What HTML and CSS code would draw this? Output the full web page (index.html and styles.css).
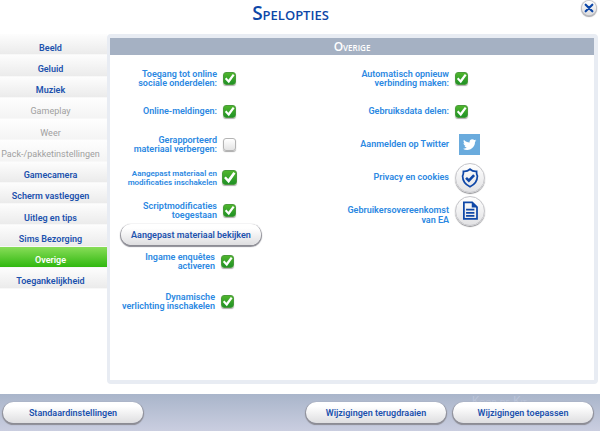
FILE: index.html
```
<!DOCTYPE html>
<html lang="nl">
<head>
    <title>Spelopties</title>
    <meta charset="utf-8">
    <meta name="viewport" content="width=device-width, initial-scale=1.0">
    <link rel="stylesheet" href="styles.css">
</head>
<body>
    <header class="topbar">
        <h1>Spelopties</h1>
        <button class="close" type="button" aria-label="Sluiten">
            <svg viewBox="0 0 16 16"><path d="M4.2 4.200l7.600 7.600M11.800 4.200l-7.600 7.600"/></svg>
        </button>
    </header>

    <div class="main">
        <nav class="tabs">
            <a href="#beeld">Beeld</a>
            <a href="#geluid">Geluid</a>
            <a href="#muziek">Muziek</a>
            <a href="#gameplay" class="disabled">Gameplay</a>
            <a href="#weer" class="disabled">Weer</a>
            <a href="#pack" class="disabled">Pack-/pakketinstellingen</a>
            <a href="#gamecamera">Gamecamera</a>
            <a href="#scherm">Scherm vastleggen</a>
            <a href="#uitleg">Uitleg en tips</a>
            <a href="#sims">Sims Bezorging</a>
            <a href="#overige" class="active">Overige</a>
            <a href="#toegankelijkheid">Toegankelijkheid</a>
        </nav>

        <section class="panel">
            <h2>Overige</h2>
            <div class="columns">
                <div class="col col-left">
                    <div class="row">
                        <label for="online">Toegang tot online<br>sociale onderdelen:</label>
                        <input type="checkbox" id="online" checked>
                    </div>
                    <div class="row">
                        <label for="meldingen">Online-meldingen:</label>
                        <input type="checkbox" id="meldingen" checked>
                    </div>
                    <div class="row">
                        <label for="verbergen">Gerapporteerd<br>materiaal verbergen:</label>
                        <input type="checkbox" id="verbergen">
                    </div>
                    <div class="row">
                        <label for="mods" class="small">Aangepast materiaal en<br>modificaties inschakelen</label>
                        <input type="checkbox" id="mods" class="big" checked>
                    </div>
                    <div class="row">
                        <label for="script">Scriptmodificaties<br>toegestaan</label>
                        <input type="checkbox" id="script" checked>
                    </div>
                    <button class="btn" type="button">Aangepast materiaal bekijken</button>
                    <div class="extra">
                        <div class="row">
                            <label for="enquete">Ingame enquêtes<br>activeren</label>
                            <input type="checkbox" id="enquete" checked>
                        </div>
                        <div class="row">
                            <label for="licht">Dynamische<br>verlichting inschakelen</label>
                            <input type="checkbox" id="licht" checked>
                        </div>
                    </div>
                </div>

                <div class="col col-right">
                    <div class="row">
                        <label for="verbinding">Automatisch opnieuw<br>verbinding maken:</label>
                        <input type="checkbox" id="verbinding" checked>
                    </div>
                    <div class="row">
                        <label for="data">Gebruiksdata delen:</label>
                        <input type="checkbox" id="data" checked>
                    </div>
                    <div class="row">
                        <label for="twitter">Aanmelden op Twitter</label>
                        <button class="twitter" id="twitter" type="button">
                            <svg viewBox="0 0 24 24"><path d="M23 5.500c-.8.400-1.600.6-2.500.7.900-.5 1.500-1.300 1.900-2.400-.9.500-1.800.9-2.800 1.100-.8-.9-1.900-1.400-3.200-1.400-2.800 0-4.900 2.600-4.200 5.300C8.600 8.600 5.300 6.900 3.100 4.200c-1.200 2-.6 4.600 1.300 5.800-.7 0-1.400-.2-2-.5 0 2 1.400 3.900 3.500 4.300-.6.200-1.300.2-2 .1.600 1.700 2.200 3 4.100 3-1.800 1.400-4.100 2.100-6.500 1.800 2 1.300 4.300 2 6.800 2 8.200 0 12.800-6.900 12.500-13.100.9-.6 1.600-1.300 2.200-2.100z"/></svg>
                        </button>
                    </div>
                    <div class="row">
                        <label for="privacy">Privacy en cookies</label>
                        <button class="round" id="privacy" type="button">
                            <svg viewBox="0 0 32 32">
                                <path class="line" d="M16 6c-2.200 2-4.800 2.800-7.500 2.500.2 2.200-.2 3.600-1 5.300.2 5.800 3.200 9.900 8.500 12.200 5.300-2.300 8.300-6.400 8.500-12.200-.8-1.700-1.200-3.100-1-5.300-2.700.3-5.300-.5-7.500-2.500z"/>
                                <path class="tick" d="M11.500 15.800l3.200 3.200 6-6.200"/>
                            </svg>
                        </button>
                    </div>
                    <div class="row tall">
                        <label for="ea">Gebruikersovereenkomst<br>van EA</label>
                        <button class="round" id="ea" type="button">
                            <svg viewBox="0 0 32 32">
                                <path class="line" d="M9 6h9.500l5.500 5.500V25H9z"/>
                                <path class="fill" d="M18 5.500v6.500h6.500z"/>
                                <path class="line" d="M11.500 14.500h9.500M11.500 18h9.500M11.500 21.500h9.500"/>
                            </svg>
                        </button>
                    </div>
                </div>
            </div>
        </section>
    </div>

    <footer class="bottombar">
        <span class="ghost">Koor de Kit</span>
        <button class="btn" type="button">Standaardinstellingen</button>
        <div class="actions">
            <button class="btn" type="button">Wijzigingen terugdraaien</button>
            <button class="btn" type="button">Wijzigingen toepassen</button>
        </div>
    </footer>
</body>
</html>
```
FILE: styles.css
```
* {
    box-sizing: border-box;
}
body {
    font-family: Roboto, "Liberation Sans", sans-serif;
    font-size: 9px;
    font-weight: 600;
    color: #1c52ae;
    background: #fff;
    margin: 0;
    min-height: 100vh;
    display: flex;
    flex-direction: column;
}
button {
    font: inherit;
    color: inherit;
    border: none;
    padding: 0;
    cursor: pointer;
}
svg {
    display: block;
    width: 100%;
    height: 100%;
}
.topbar {
    display: flex;
    align-items: flex-start;
    height: 34px;
    padding: 0 3px 0 0;
}
.topbar h1 {
    flex: 1;
    margin: 0;
    font-family: "Open Sans", sans-serif;
    font-size: 19px;
    line-height: 26px;
    font-weight: 600;
    font-variant: small-caps;
    text-align: center;
    color: #0d47a8;
}
.close {
    width: 14px;
    height: 14px;
    margin: 1px 1px 0;
    border-radius: 50%;
    background: linear-gradient(#fff, #dcdcde);
    box-shadow: 0 0 1px 1px #c4c4c8, 0 1px 1px 1px #a4a4a8;
}
.close path {
    stroke: #0d47a8;
    stroke-width: 2.5;
    stroke-linecap: round;
}
.main {
    flex: 1;
    display: flex;
    padding-right: 2px;
}
.tabs {
    width: 107px;
    height: 255px;
    display: grid;
    grid-auto-rows: 1fr;
}
.tabs a {
    display: flex;
    align-items: center;
    justify-content: center;
    padding: 7px 6px 0 0;
    line-height: 12px;
    color: #1c52ae;
    text-decoration: none;
    white-space: nowrap;
    background: linear-gradient(#fdfdfd, #ebebeb);
    border-bottom: 1px solid #f8f8f8;
}
.tabs a.disabled {
    color: #a0a0a0;
    font-weight: 400;
    background: linear-gradient(#fefefe, #f4f4f4);
}
.tabs a.active {
    color: #fff;
    background: linear-gradient(#88dd58, #30b810);
}
.panel {
    flex: 1;
    margin-bottom: 10px;
    border: 4px solid #e8ecf3;
    border-left-width: 3px;
    border-radius: 4px;
}
.panel h2 {
    margin: 0;
    font-family: "Open Sans", sans-serif;
    font-size: 12px;
    line-height: 17px;
    font-weight: 600;
    font-variant: small-caps;
    text-align: center;
    color: #fff;
    background: #a5b1c3;
}
.columns {
    display: flex;
    padding-top: 9px;
}
.col {
    display: flex;
    flex-direction: column;
    gap: 4px;
    color: #2b88e2;
}
.col-left {
    width: 151px;
}
.col-right {
    flex: 1;
}
.row {
    display: flex;
    align-items: center;
    height: 29px;
}
.row label {
    flex: 1;
    text-align: right;
    line-height: 9px;
    white-space: nowrap;
}
.row label.small {
    font-size: 8px;
}
.col-left .row {
    padding-right: 19px;
}
.col-left .btn {
    align-self: flex-end;
    color: #1c52ae;
    margin-top: -5px;
}
.extra {
    display: flex;
    flex-direction: column;
    gap: 11px;
    margin-top: -2px;
    padding-right: 2px;
}
.col-right .row label {
    flex: none;
    width: 188px;
}
.tall label {
    line-height: 10px;
    padding-top: 8px;
}
input[type="checkbox"] {
    appearance: none;
    flex: none;
    width: 13px;
    height: 13px;
    margin: 0 6px;
    border: 1px solid #b4b4b4;
    border-radius: 3px;
    background: linear-gradient(#fff, #e4e4e4);
    box-shadow: 0 1px 1px #aaa;
}
input[type="checkbox"]:checked {
    border-color: #4a9a3c;
    background: linear-gradient(#4fb52c, #1f9226);
}
input[type="checkbox"]:checked::after {
    content: "";
    display: block;
    height: 100%;
    background: #fff;
    clip-path: polygon(8% 54%, 22% 42%, 40% 62%, 80% 8%, 96% 20%, 44% 94%);
}
input[type="checkbox"].big {
    width: 15px;
    height: 15px;
    margin: 0 5px;
}
.twitter {
    width: 21px;
    height: 21px;
    margin-left: 10px;
    padding: 3px;
    background: #6aabdd;
}
.twitter path {
    fill: #fff;
}
.round {
    flex: none;
    width: 30px;
    height: 30px;
    margin-left: 6px;
    border-radius: 50%;
    background: linear-gradient(#fff, #e2e2e4);
    border: 1px solid #c6c6ca;
    box-shadow: 0 1px 1px #909094;
}
.round .line,
.round .tick {
    fill: none;
    stroke: #0f48a8;
    stroke-width: 2;
}
.round .tick {
    stroke-width: 3;
}
.round .fill {
    fill: #0f48a8;
}
.btn {
    width: 140px;
    height: 21px;
    border-radius: 11px;
    line-height: 12px;
    white-space: nowrap;
    background: linear-gradient(#fff 20%, #dedee0);
    box-shadow: 0 1px 1px 1px #8c8c94;
}
.bottombar {
    position: relative;
    display: flex;
    justify-content: space-between;
    align-items: center;
    height: 37px;
    padding: 0 7px 0 3px;
    background: linear-gradient(#a9b5ca, #cacee0);
}
.bottombar .btn {
    position: relative;
}
/* heading of the screen behind, showing faintly through the bar */
.ghost {
    position: absolute;
    right: 73px;
    top: 0;
    font-family: "Open Sans", sans-serif;
    font-size: 12px;
    line-height: 14px;
    font-weight: 400;
    font-variant: small-caps;
    color: #bcc5da;
}
.actions {
    display: flex;
    gap: 7px;
}
```
